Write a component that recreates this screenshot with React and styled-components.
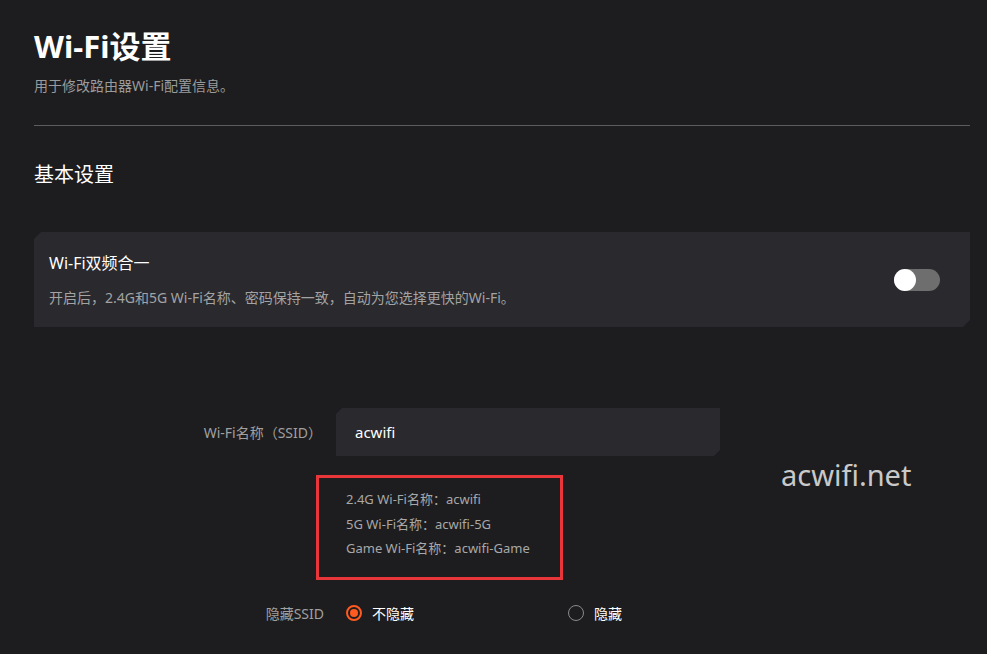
import React, { useState } from 'react'
import styled, { createGlobalStyle } from 'styled-components'

const GlobalStyle = createGlobalStyle`
  html, body {
    margin: 0;
    padding: 0;
    background: #1d1d1f;
  }
  body {
    font-family: "Noto Sans", "Noto Sans CJK SC", sans-serif;
    color: #fff;
  }
`;

const cut = (s) => `polygon(${s}px 0, 100% 0, 100% calc(100% - ${s}px), calc(100% - ${s}px) 100%, 0 100%, 0 ${s}px)`;

const Page = styled.div`
  position: relative;
  width: 987px;
  height: 654px;
  box-sizing: border-box;
  padding: 26px 17px 0 34px;
  overflow: hidden;
  background: #1d1d1f;
`;

const Title = styled.h1`
  margin: 0;
  font-size: 31px;
  line-height: 40px;
  font-weight: 700;
  color: #fff;
`;

const Subtitle = styled.p`
  margin: 10px 0 0;
  font-size: 14px;
  line-height: 20px;
  color: #9b9b9b;
`;

const Divider = styled.hr`
  margin: 29px 0 0;
  border: 0;
  height: 1px;
  background: #5c5c5c;
`;

const SectionTitle = styled.h2`
  margin: 35px 0 0;
  font-size: 20px;
  line-height: 28px;
  font-weight: 400;
  color: #fff;
`;

const Card = styled.div`
  margin-top: 43px;
  display: flex;
  align-items: center;
  justify-content: space-between;
  padding: 19px 30px 19px 15px;
  background: #29292e;
  clip-path: ${cut(7)};
`;

const CardText = styled.div`
  display: flex;
  flex-direction: column;
  gap: 13px;
`;

const CardTitle = styled.div`
  font-size: 16px;
  line-height: 24px;
  color: #fff;
`;

const CardDesc = styled.div`
  font-size: 14px;
  line-height: 20px;
  color: #a3a3a3;
`;

const Switch = styled.button`
  position: relative;
  width: 46px;
  height: 22px;
  border: 0;
  padding: 0;
  border-radius: 11px;
  background: ${p => (p.on ? '#ff5a1f' : '#6e6e6e')};
  cursor: pointer;
  &::after {
    content: '';
    position: absolute;
    top: 0;
    left: ${p => (p.on ? '24px' : '0')};
    width: 22px;
    height: 22px;
    border-radius: 50%;
    background: #fff;
  }
`;

const Form = styled.div`
  margin-top: 81px;
  display: grid;
  grid-template-columns: 290px 384px;
  column-gap: 12px;
  align-items: center;
`;

const Label = styled.div`
  text-align: right;
  font-size: 14px;
  color: #a0a0a0;
  padding-right: ${p => (p.small ? '0' : '2px')};
`;

const Input = styled.input`
  height: 48px;
  box-sizing: border-box;
  border: 0;
  outline: 0;
  padding: 0 19px;
  background: #29292e;
  color: #fff;
  font-family: inherit;
  font-size: 15px;
  clip-path: ${cut(6)};
`;

const HintBox = styled.div`
  grid-column: 2;
  margin: 19px 0 0 -20px;
  width: 247px;
  height: 105px;
  box-sizing: border-box;
  border: 3px solid #e8363a;
  padding: 9px 0 0 27px;
`;

const Hint = styled.div`
  font-size: 13px;
  line-height: 24.5px;
  color: #a8a8a8;
  white-space: nowrap;
`;

const RadioRow = styled.div`
  grid-column: 1 / span 2;
  display: grid;
  grid-template-columns: 290px 1fr;
  column-gap: 12px;
  align-items: center;
  margin-top: 21px;
  height: 24px;
`;

const RadioGroup = styled.div`
  display: flex;
  padding-left: 10px;
`;

const Option = styled.label`
  display: flex;
  align-items: center;
  gap: 10px;
  width: ${p => p.w}px;
  font-size: 14px;
  color: #fff;
  cursor: pointer;
`;

const Dot = styled.span`
  box-sizing: border-box;
  width: 16px;
  height: 16px;
  border-radius: 50%;
  border: ${p => (p.checked ? '2px solid #ff5a1f' : '1.5px solid #8a8a8a')};
  display: flex;
  align-items: center;
  justify-content: center;
  &::after {
    content: '';
    width: 8px;
    height: 8px;
    border-radius: 50%;
    background: ${p => (p.checked ? '#ff5a1f' : 'transparent')};
  }
`;

const Watermark = styled.div`
  position: absolute;
  left: 781px;
  top: 455px;
  font-size: 29px;
  line-height: 40px;
  color: #c9c9c9;
`;

export default function App() {
  const [merged, setMerged] = useState(false);
  const [ssid, setSsid] = useState('acwifi');
  const [hidden, setHidden] = useState(false);

  return (
    <Page>
      <GlobalStyle />
      <Title>Wi-Fi设置</Title>
      <Subtitle>用于修改路由器Wi-Fi配置信息。</Subtitle>
      <Divider />
      <SectionTitle>基本设置</SectionTitle>
      <Card>
        <CardText>
          <CardTitle>Wi-Fi双频合一</CardTitle>
          <CardDesc>开启后，2.4G和5G Wi-Fi名称、密码保持一致，自动为您选择更快的Wi-Fi。</CardDesc>
        </CardText>
        <Switch on={merged ? 1 : 0} onClick={() => setMerged(!merged)} />
      </Card>
      <Form>
        <Label>Wi-Fi名称（SSID）</Label>
        <Input value={ssid} onChange={e => setSsid(e.target.value)} />
        <HintBox>
          <Hint>2.4G Wi-Fi名称：{ssid}</Hint>
          <Hint>5G Wi-Fi名称：{ssid}-5G</Hint>
          <Hint>Game Wi-Fi名称：{ssid}-Game</Hint>
        </HintBox>
        <RadioRow>
          <Label small>隐藏SSID</Label>
          <RadioGroup>
            <Option w={222} onClick={() => setHidden(false)}>
              <Dot checked={!hidden} />
              不隐藏
            </Option>
            <Option w={120} onClick={() => setHidden(true)}>
              <Dot checked={hidden} />
              隐藏
            </Option>
          </RadioGroup>
        </RadioRow>
      </Form>
      <Watermark>acwifi.net</Watermark>
    </Page>
  )
}
